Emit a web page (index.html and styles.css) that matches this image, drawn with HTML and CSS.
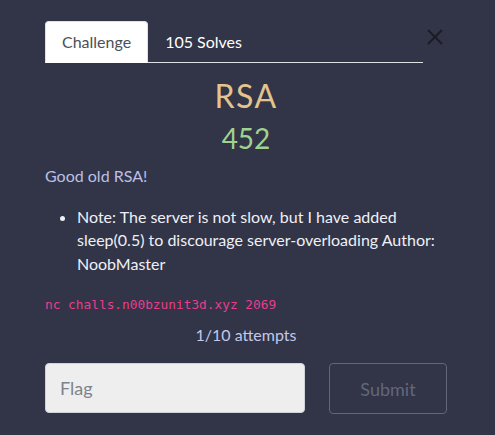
FILE: index.html
```html
<!DOCTYPE html>
<html lang="en">
<head>
<meta charset="utf-8">
<title>RSA</title>
<link rel="stylesheet" href="styles.css">
</head>
<body>
<div class="modal">
  <div class="head">
    <nav class="tabs">
      <a class="tab active">Challenge</a>
      <a class="tab">105 Solves</a>
    </nav>
    <button class="close" aria-label="Close">
      <svg width="16" height="16" viewBox="0 0 16 16"><path d="M1 1L15 15M15 1L1 15" stroke="#1b1c26" stroke-width="2" fill="none"/></svg>
    </button>
  </div>
  <h1 class="title">RSA</h1>
  <h2 class="points">452</h2>
  <p class="desc">Good old RSA!</p>
  <ul class="notes">
    <li>Note: The server is not slow, but I have added sleep(0.5) to discourage server-overloading Author: NoobMaster</li>
  </ul>
  <p class="cmd"><code>nc challs.n00bzunit3d.xyz 2069</code></p>
  <p class="attempts">1/10 attempts</p>
  <form class="submit-row">
    <input class="flag" type="text" placeholder="Flag">
    <button class="submit" type="button" disabled>Submit</button>
  </form>
</div>
</body>
</html>
```
FILE: styles.css
```css
html, body {
  margin: 0;
  padding: 0;
  background: #323448;
}
body {
  font-family: Lato, "Open Sans", sans-serif;
  font-size: 16px;
  line-height: 1.5;
  color: #eef0f6;
}
.modal {
  width: 402px;
  padding: 21px 0 0 45px;
}
.head {
  display: flex;
  align-items: flex-start;
}
.tabs {
  flex: 1;
  display: flex;
  border-bottom: 1px solid #dee2e6;
}
.tab {
  display: block;
  padding: 8px 16px;
  line-height: 24px;
  color: #ffffff;
  border: 1px solid transparent;
  border-radius: 4px 4px 0 0;
  margin-bottom: -1px;
}
.tab.active {
  background: #ffffff;
  color: #495057;
  border-color: #dee2e6 #dee2e6 #ffffff;
}
.close {
  width: 24px;
  height: 24px;
  padding: 0;
  margin-top: 4px;
  background: none;
  border: 0;
  display: flex;
  align-items: center;
  justify-content: center;
}
.title {
  margin: 14px 0 0;
  text-align: center;
  font-size: 32px;
  font-weight: 400;
  line-height: 1.2;
  letter-spacing: 1.5px;
  color: #e3c48d;
}
.points {
  margin: 7px 0 0;
  text-align: center;
  font-size: 28px;
  font-weight: 400;
  line-height: 1.2;
  color: #a0d28f;
}
.desc {
  margin: 8px 0 17px;
  color: #bac0e6;
}
.notes {
  margin: 0 0 16px;
  padding-left: 32px;
  line-height: 23.5px;
}
.cmd {
  margin: 0 0 8px;
}
code {
  font-family: "DejaVu Sans Mono", monospace;
  font-size: 12.8px;
  color: #e83e8c;
}
.attempts {
  margin: 0 0 16px;
  text-align: center;
  color: #c3c8ea;
}
.submit-row {
  display: flex;
  gap: 24px;
  margin: 0;
}
.flag {
  box-sizing: border-box;
  width: 260px;
  height: 50px;
  padding: 0 14px;
  background: #eeeeee;
  border: 1px solid #ced4da;
  border-radius: 4px;
  font-family: Lato, sans-serif;
  font-size: 18px;
  color: #495057;
}
.flag::placeholder {
  color: #7d838b;
}
.submit {
  box-sizing: border-box;
  width: 118px;
  height: 51px;
  background: transparent;
  border: 1px solid #62667a;
  border-radius: 4px;
  font-family: Lato, sans-serif;
  font-size: 18px;
  color: #62677a;
}
```
